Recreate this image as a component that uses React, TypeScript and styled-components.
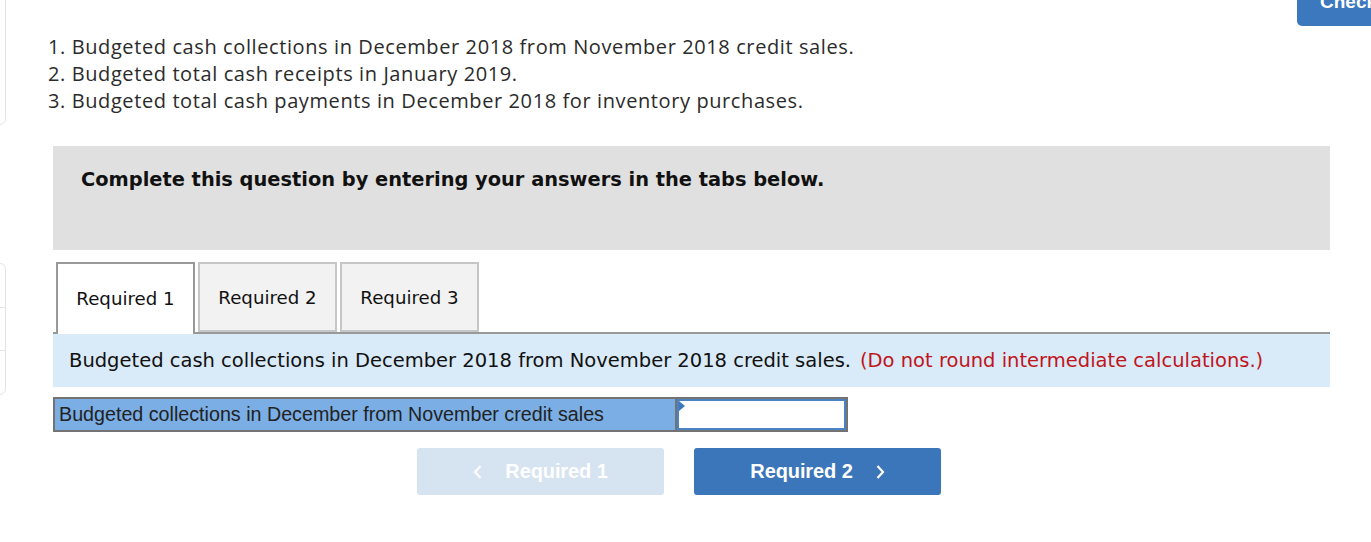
import React from "react";
import styled, { createGlobalStyle } from "styled-components";

const Global = createGlobalStyle`
  html, body { margin: 0; padding: 0; background: #fff; overflow: hidden; }
  body { width: 1371px; height: 542px; }
`;

const Page = styled.div`
  position: relative;
  display: flex;
  width: 1371px;
  height: 542px;
  overflow: hidden;
`;

const SideRail = styled.div`
  width: 6px;
  flex: none;
  overflow: hidden;
  display: flex;
  flex-direction: column;
`;

const SideCard = styled.div<{ $top: number; $h: number }>`
  width: 200px;
  margin-left: -194px;
  margin-top: ${(p) => p.$top}px;
  height: ${(p) => p.$h}px;
  box-sizing: border-box;
  border: 1px solid #e4e4e4;
  border-radius: 6px;
  display: flex;
  flex-direction: column;
`;

const SideRow = styled.div`
  flex: 1;
  border-bottom: 1px solid #e4e4e4;
  &:last-child { border-bottom: none; }
`;

const CheckButton = styled.button`
  position: absolute;
  top: -14px;
  right: -30px;
  width: 104px;
  height: 40px;
  border: none;
  border-radius: 0 0 0 5px;
  background: #3b78bd;
  color: #fff;
  font-family: "Liberation Sans", Arial, sans-serif;
  font-weight: bold;
  font-size: 19px;
  line-height: 32px;
  text-align: left;
  padding: 0 0 8px 23px;
`;

const Main = styled.div`
  flex: 1;
  padding: 33px 41px 0 47px;
  display: flex;
  flex-direction: column;
`;

const QuestionList = styled.ol`
  margin: 0 0 0 -5px;
  padding: 0;
  list-style: none;
  font-family: "Open Sans", Lato, sans-serif;
  font-size: 20px;
  letter-spacing: 0.6px;
  line-height: 27px;
  color: #2b2b2b;
  white-space: nowrap;
`;

const Notice = styled.div`
  margin-top: 32px;
  height: 104px;
  box-sizing: border-box;
  background: #e0e0e0;
  padding: 22px 28px;
  font-family: "DejaVu Sans", Verdana, sans-serif;
  font-weight: bold;
  font-size: 19.4px;
  line-height: 23px;
  color: #111;
  white-space: nowrap;
`;

const TabStrip = styled.div`
  margin-top: 12px;
  display: flex;
  gap: 3px;
  padding-left: 3px;
  border-bottom: 2px solid #999;
  height: 70px;
`;

const Tab = styled.div<{ $active?: boolean }>`
  width: 139px;
  height: ${(p) => (p.$active ? 72 : 70)}px;
  margin-bottom: ${(p) => (p.$active ? -2 : 0)}px;
  box-sizing: border-box;
  border: 2px solid ${(p) => (p.$active ? "#999" : "#c6c6c6")};
  border-bottom: ${(p) => (p.$active ? "none" : "2px solid #c6c6c6")};
  background: ${(p) => (p.$active ? "#fff" : "#f2f2f2")};
  display: flex;
  align-items: center;
  justify-content: center;
  padding-bottom: ${(p) => (p.$active ? 2 : 0)}px;
  font-family: "DejaVu Sans", Verdana, sans-serif;
  font-size: 18.2px;
  color: #111;
  white-space: nowrap;
`;

const InfoBar = styled.div`
  height: 53px;
  background: #d9eaf8;
  display: flex;
  align-items: center;
  padding-left: 16px;
  font-family: "DejaVu Sans", Verdana, sans-serif;
  font-size: 19.5px;
  color: #111;
  white-space: nowrap;
`;

const Warn = styled.span`
  color: #c0151b;
  margin-left: 9px;
`;

const AnswerRow = styled.div`
  margin-top: 10px;
  display: flex;
  width: 795px;
  height: 35px;
  box-sizing: border-box;
  border: 2px solid #737373;
  background: #737373;
`;

const LabelCell = styled.div`
  width: 620px;
  box-sizing: border-box;
  background: #7aaee5;
  display: flex;
  align-items: center;
  padding-left: 4px;
  font-family: "Liberation Sans", Arial, sans-serif;
  font-size: 19.7px;
  color: #222;
  white-space: nowrap;
`;

const InputCell = styled.div`
  position: relative;
  flex: 1;
  margin-left: 2px;
  background: #fff;
  border: 2px solid #4a82c4;
  box-sizing: border-box;
`;

const Marker = styled.div`
  position: absolute;
  top: 0;
  left: 0;
  width: 0;
  height: 0;
  border-top: 5px solid transparent;
  border-bottom: 5px solid transparent;
  border-left: 6px solid #3b78bd;
`;

const NavRow = styled.div`
  margin-top: 16px;
  display: flex;
  gap: 30px;
  padding-left: 364px;
`;

const NavButton = styled.div<{ $disabled?: boolean }>`
  width: 247px;
  height: 47px;
  border-radius: 3px;
  background: ${(p) => (p.$disabled ? "#d6e3f1" : "#3a76b9")};
  color: #fff;
  display: flex;
  align-items: center;
  justify-content: center;
  gap: 22px;
  font-family: "Liberation Sans", Arial, sans-serif;
  font-weight: bold;
  font-size: 20px;
  letter-spacing: -0.1px;
`;

const Chevron = ({ dir }: { dir: "left" | "right" }) => (
  <svg width="10" height="16" viewBox="0 0 10 16">
    <path
      d={dir === "left" ? "M7.5 2 L2 8 L7.5 14" : "M2.5 2 L8 8 L2.5 14"}
      fill="none"
      stroke="#fff"
      strokeWidth="2.2"
    />
  </svg>
);

export default function App() {
  return (
    <Page>
      <Global />
      <SideRail>
        <SideCard $top={-20} $h={145}>
          <SideRow />
        </SideCard>
        <SideCard $top={138} $h={132}>
          <SideRow />
          <SideRow />
          <SideRow />
        </SideCard>
      </SideRail>
      <Main>
        <QuestionList>
          <li>1. Budgeted cash collections in December 2018 from November 2018 credit sales.</li>
          <li>2. Budgeted total cash receipts in January 2019.</li>
          <li>3. Budgeted total cash payments in December 2018 for inventory purchases.</li>
        </QuestionList>
        <Notice>Complete this question by entering your answers in the tabs below.</Notice>
        <TabStrip>
          <Tab $active>Required 1</Tab>
          <Tab>Required 2</Tab>
          <Tab>Required 3</Tab>
        </TabStrip>
        <InfoBar>
          Budgeted cash collections in December 2018 from November 2018 credit sales.
          <Warn>(Do not round intermediate calculations.)</Warn>
        </InfoBar>
        <AnswerRow>
          <LabelCell>Budgeted collections in December from November credit sales</LabelCell>
          <InputCell>
            <Marker />
          </InputCell>
        </AnswerRow>
        <NavRow>
          <NavButton $disabled>
            <Chevron dir="left" />
            <span>Required 1</span>
          </NavButton>
          <NavButton>
            <span>Required 2</span>
            <Chevron dir="right" />
          </NavButton>
        </NavRow>
      </Main>
      <CheckButton>Check</CheckButton>
    </Page>
  );
}
